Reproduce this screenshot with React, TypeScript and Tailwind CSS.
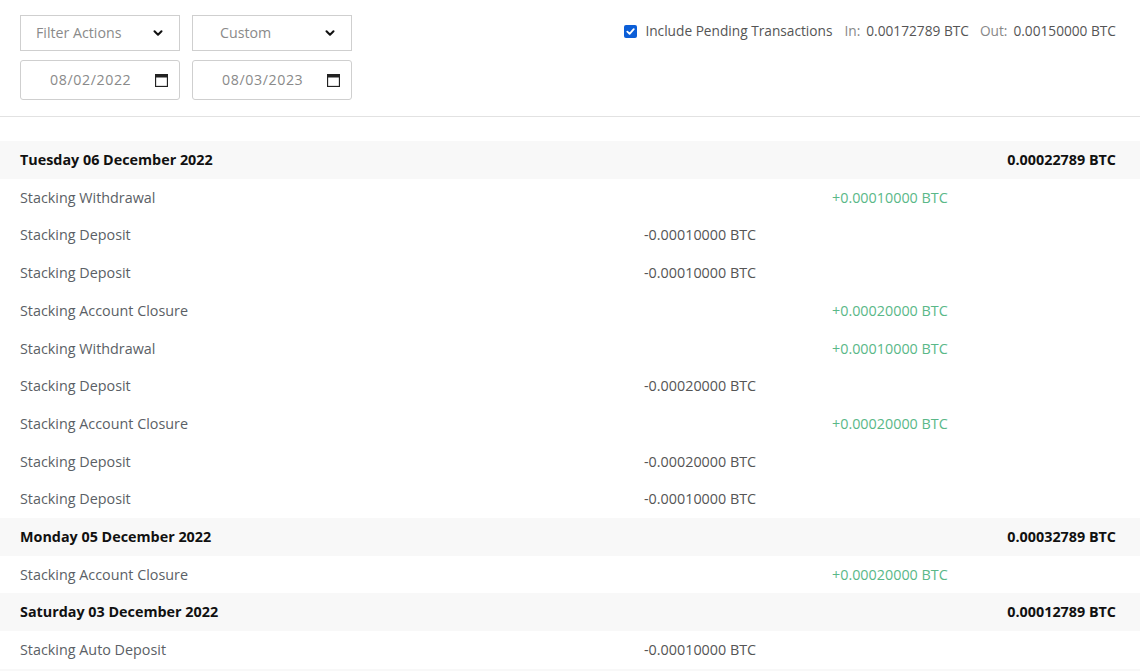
import { ChevronDown } from 'lucide-react'

type Row = { label: string; debit?: string; credit?: string }
type Day = { date: string; total: string; rows: Row[] }

const days: Day[] = [
  {
    date: 'Tuesday 06 December 2022',
    total: '0.00022789 BTC',
    rows: [
      { label: 'Stacking Withdrawal', credit: '+0.00010000 BTC' },
      { label: 'Stacking Deposit', debit: '-0.00010000 BTC' },
      { label: 'Stacking Deposit', debit: '-0.00010000 BTC' },
      { label: 'Stacking Account Closure', credit: '+0.00020000 BTC' },
      { label: 'Stacking Withdrawal', credit: '+0.00010000 BTC' },
      { label: 'Stacking Deposit', debit: '-0.00020000 BTC' },
      { label: 'Stacking Account Closure', credit: '+0.00020000 BTC' },
      { label: 'Stacking Deposit', debit: '-0.00020000 BTC' },
      { label: 'Stacking Deposit', debit: '-0.00010000 BTC' }
    ]
  },
  {
    date: 'Monday 05 December 2022',
    total: '0.00032789 BTC',
    rows: [{ label: 'Stacking Account Closure', credit: '+0.00020000 BTC' }]
  },
  {
    date: 'Saturday 03 December 2022',
    total: '0.00012789 BTC',
    rows: [{ label: 'Stacking Auto Deposit', debit: '-0.00010000 BTC' }]
  }
]

function CalendarIcon() {
  return (
    <svg width="13" height="13" viewBox="0 0 13 13" className="text-[#222]">
      <rect x="0.5" y="0.5" width="12" height="12" fill="none" stroke="currentColor" strokeWidth="1.3" />
      <rect x="0.5" y="0.5" width="12" height="3" fill="currentColor" />
    </svg>
  )
}

function SelectBox({ label, pl }: { label: string; pl: string }) {
  return (
    <div className={`w-[160px] h-[36px] border border-[#cfcfcf] bg-white flex items-center justify-between ${pl} pr-[14px] text-[14.2px] text-[#8a8a8a]`}>
      <span>{label}</span>
      <ChevronDown className="w-[14px] h-[14px] text-[#111]" strokeWidth={3.5} />
    </div>
  )
}

function DateBox({ value }: { value: string }) {
  return (
    <div className="w-[160px] h-[40px] border border-[#cfcfcf] rounded-[3px] bg-white flex items-center justify-between pl-[29px] pr-[11px] text-[14.2px] tracking-[0.6px] text-[#8a8a8a]">
      <span>{value}</span>
      <CalendarIcon />
    </div>
  )
}

export default function App() {
  return (
    <div className="w-[1140px] h-[671px] overflow-hidden bg-white font-['Open_Sans',sans-serif] text-[14px]">
      <div className="h-[117px] border-b border-[#e2e2e2] flex justify-between pl-[20px] pr-[24px] pt-[15px]">
        <div className="grid grid-cols-[160px_160px] gap-x-[12px] gap-y-[9px] content-start">
          <SelectBox label="Filter Actions" pl="pl-[15px]" />
          <SelectBox label="Custom" pl="pl-[27px]" />
          <DateBox value="08/02/2022" />
          <DateBox value="08/03/2023" />
        </div>
        <div className="flex items-center h-[33px] text-[#555] text-[13.7px]">
          <span className="w-[13px] h-[13px] rounded-[2px] bg-[#0b5ed7] flex items-center justify-center mr-[8px]">
            <svg width="9" height="9" viewBox="0 0 10 10">
              <path d="M1.5 5.2 L4 7.6 L8.6 2.4" fill="none" stroke="white" strokeWidth="2" strokeLinecap="round" strokeLinejoin="round" />
            </svg>
          </span>
          <span>Include Pending Transactions</span>
          <span className="ml-[12px] text-[#888]">In:</span>
          <span className="ml-[6px]">0.00172789 BTC</span>
          <span className="ml-[11px] text-[#888]">Out:</span>
          <span className="ml-[6px]">0.00150000 BTC</span>
        </div>
      </div>

      <div className="mt-[24px] text-[14.35px]">
        {days.map((day) => (
          <div key={day.date}>
            <div className="h-[37.7px] bg-[#f8f8f8] flex items-center justify-between pl-[20px] pr-[24px] font-bold text-[#111]">
              <span>{day.date}</span>
              <span>{day.total}</span>
            </div>
            {day.rows.map((row, i) => (
              <div key={i} className="h-[37.7px] grid grid-cols-[624px_188px_1fr] items-center pl-[20px]">
                <span className="text-[#5b5f66]">{row.label}</span>
                <span className="text-[#555]">{row.debit}</span>
                <span className="text-[#5ab888]">{row.credit}</span>
              </div>
            ))}
          </div>
        ))}
        <div className="h-[37.7px] bg-[#f8f8f8]" />
      </div>
    </div>
  )
}
